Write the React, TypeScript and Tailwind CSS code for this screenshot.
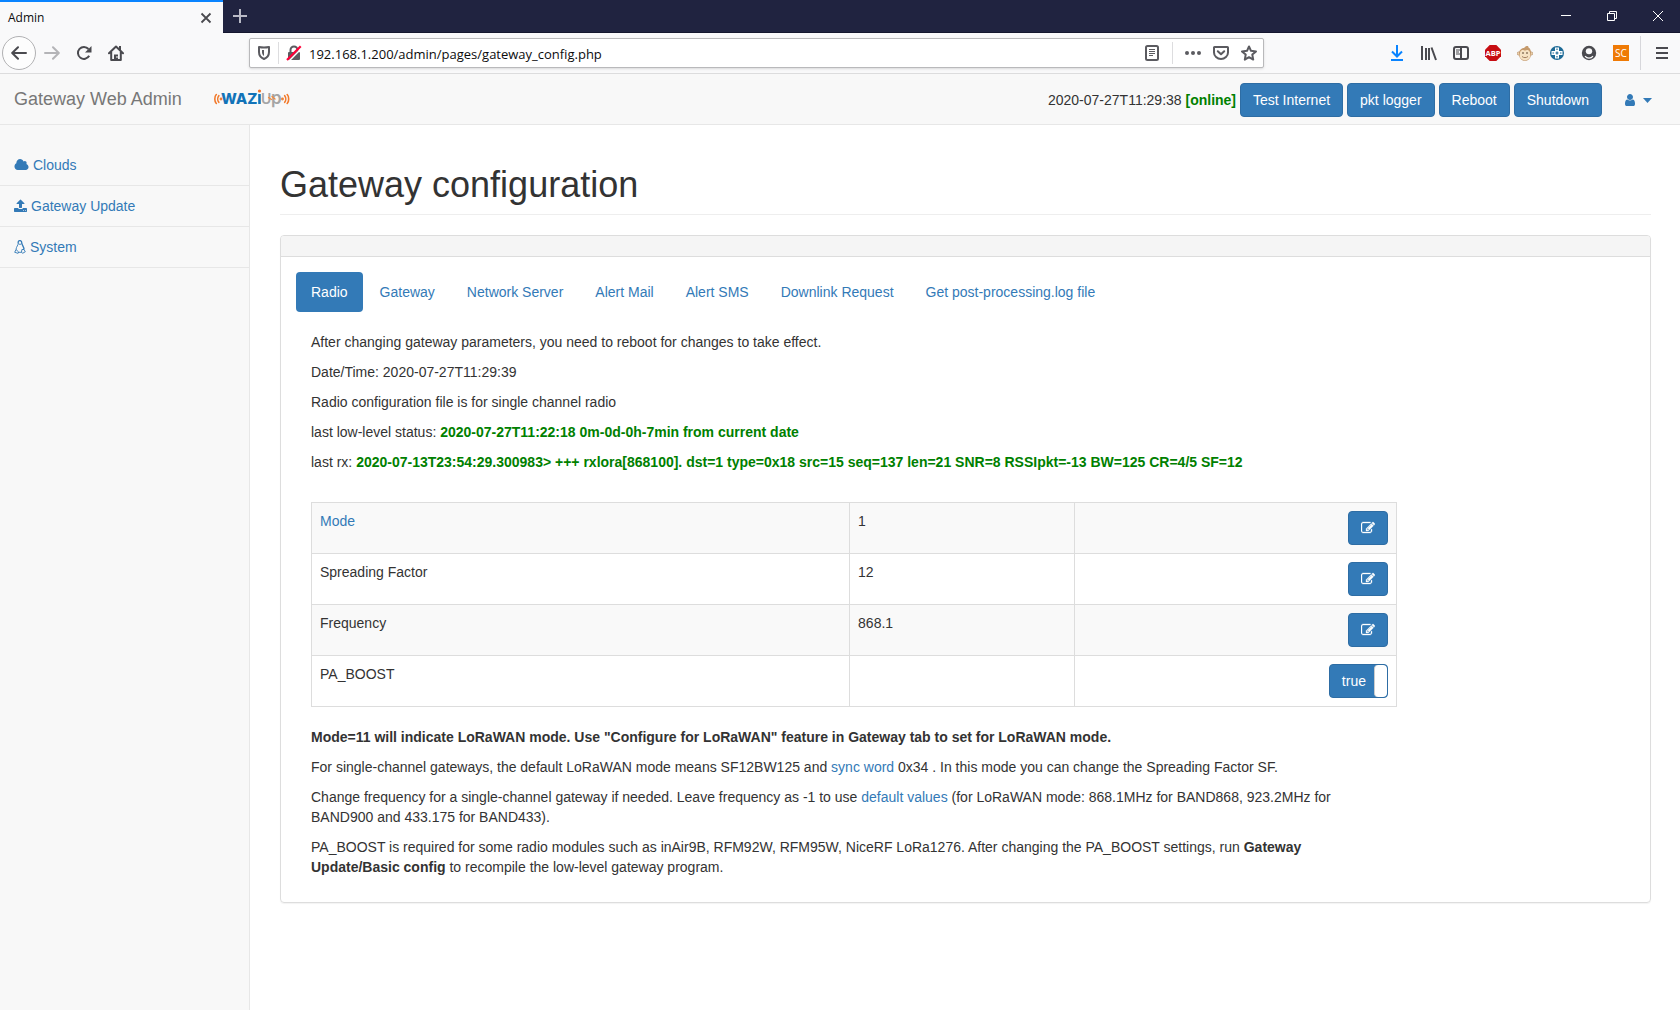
import type { ReactNode } from "react";

const edit =
  "M888 1184l116-116-152-152-116 116v56h96v96h56zm440-720q-16-16-33 1l-350 350q-17 17-1 33t33-1l350-350q17-17 1-33zm80 594v190q0 119-84.5 203.5t-203.5 84.5h-832q-119 0-203.5-84.5t-84.5-203.5v-832q0-119 84.5-203.5t203.5-84.5h832q63 0 117 25 15 7 18 23 3 17-9 29l-49 49q-14 14-32 8-23-6-45-6h-832q-66 0-113 47t-47 113v832q0 66 47 113t113 47h832q66 0 113-47t47-113v-126q0-13 9-22l64-64q15-15 35-7t20 29zm-96-738l288 288-672 672h-288v-288zm444 132l-92 92-288-288 92-92q28-28 68-28t68 28l152 152q28 28 28 68t-28 68z";
const cloud =
  "M1984 1152q0 159-112.5 271.5t-271.5 112.5h-1088q-185 0-316.5-131.5t-131.5-316.5q0-132 71-241.5t187-163.5q-2-28-2-43 0-212 150-362t362-150q158 0 286.5 88t187.5 230q70-62 166-62 106 0 181 75t75 181q0 75-41 138 129 30 213 134.5t84 239.5z";
const user =
  "M1536 1399q0 109-62.5 187t-150.5 78h-854q-88 0-150.5-78t-62.5-187q0-85 8.5-160.5t31.5-152 58.5-131 94-89 134.5-34.5q131 128 313 128t313-128q76 0 134.5 34.5t94 89 58.5 131 31.5 152 8.5 160.5zm-256-887q0 159-112.5 271.5t-271.5 112.5-271.5-112.5-112.5-271.5 112.5-271.5 271.5-112.5 271.5 112.5 112.5 271.5z";
const upload =
  "M1344 1472q0-26-19-45t-45-19-45 19-19 45 19 45 45 19 45-19 19-45zm256 0q0-26-19-45t-45-19-45 19-19 45 19 45 45 19 45-19 19-45zm128-224v320q0 40-28 68t-68 28h-1472q-40 0-68-28t-28-68v-320q0-40 28-68t68-28h427q21 56 70.5 92t110.5 36h256q61 0 110.5-36t70.5-92h427q40 0 68 28t28 68zm-325-648q-17 40-59 40h-256v448q0 26-19 45t-45 19h-256q-26 0-45-19t-19-45v-448h-256q-42 0-59-40-17-39 14-69l448-448q18-19 45-19t45 19l448 448q31 30 14 69z";

function Glyph({ children, label }: { children: ReactNode; label: string }) {
  return (
    <button type="button" aria-label={label} className="flex h-8 w-8 shrink-0 items-center justify-center">
      <svg width="16" height="16" viewBox="0 0 16 16" fill="none" stroke="#4a4a4f" strokeWidth="2">
        {children}
      </svg>
    </button>
  );
}

function TitleBar() {
  return (
    <div className="flex h-[33px] border-b border-[#14162e] bg-[#202340]">
      <div className="-mb-px flex w-[223px] items-center justify-between border-t-2 border-[#0a84ff] bg-[#f9f9fa] pr-[11px] pl-2">
        <span className="font-['Open_Sans',sans-serif] text-[12px] leading-4 text-[#0c0c0d]">Admin</span>
        <button type="button" aria-label="Close tab">
          <svg width="12" height="12" viewBox="0 0 12 12" stroke="#4a4a4f" strokeWidth="1.8">
            <path d="M1.5 1.5l9 9M10.5 1.5l-9 9" />
          </svg>
        </button>
      </div>
      <button type="button" aria-label="New tab" className="flex w-[34px] items-center justify-center">
        <svg width="14" height="14" viewBox="0 0 14 14" stroke="#b9bac6" strokeWidth="2">
          <path d="M7 0v14M0 7h14" />
        </svg>
      </button>
      <div className="flex-1" />
      <button type="button" aria-label="Minimize" className="flex w-[46px] items-center justify-center">
        <svg width="10" height="10" viewBox="0 0 10 10" stroke="#fff">
          <path d="M0 4.5h10" />
        </svg>
      </button>
      <button type="button" aria-label="Restore" className="flex w-[46px] items-center justify-center">
        <svg width="10" height="10" viewBox="0 0 10 10" fill="none" stroke="#fff">
          <path d="M.5 2.500h7v7h-7zM2.500 2.500v-2h7v7h-2" />
        </svg>
      </button>
      <button type="button" aria-label="Close window" className="flex w-[45px] items-center justify-center">
        <svg width="10" height="10" viewBox="0 0 10 10" stroke="#fff">
          <path d="M0 0l10 10M10 0L0 10" />
        </svg>
      </button>
    </div>
  );
}

function AddressBar() {
  return (
    <div className="flex h-[30px] w-[1015px] shrink items-center rounded-[2px] border border-[#b9b9bb] bg-white shadow-sm">
      <div className="flex w-7 justify-center">
        <svg width="12" height="14" viewBox="0 0 12 14" fill="none" stroke="#5b5b60" strokeWidth="2">
          <path d="M6 1.500c1.800 0 3.200-.1 5-.5v5c0 3.500-1.800 5.700-5 7-3.200-1.300-5-3.500-5-7V1c1.800.4 3.200.5 5 .5z" strokeLinejoin="round" />
          <path d="M6 4v6C4.600 9 4 7.800 4 6V4z" fill="#5b5b60" stroke="none" />
        </svg>
      </div>
      <div className="h-[22px] w-px bg-[#dddddf]" />
      <div className="flex w-[30px] justify-center">
        <svg width="16" height="16" viewBox="0 0 16 16" fill="none">
          <path d="M4.500 8V5a3.500 3.500 0 017 0v3" stroke="#5b5b60" strokeWidth="2" />
          <rect x="2" y="7" width="12" height="8" rx="1" fill="#5b5b60" />
          <path d="M2 17L16 3" stroke="#fff" strokeWidth="1.500" />
          <path d="M1 15L14.700 1.300" stroke="#ff0039" strokeWidth="2.200" />
        </svg>
      </div>
      <input
        aria-label="Address"
        defaultValue="192.168.1.200/admin/pages/gateway_config.php"
        className="min-w-0 flex-1 bg-transparent pt-px font-['Open_Sans',sans-serif] text-[13px] leading-5 text-[#0c0c0d] outline-none"
      />
      <div className="flex w-10 justify-center">
        <svg width="14" height="16" viewBox="0 0 14 16" fill="none" stroke="#5b5b60">
          <rect x="1" y="1" width="12" height="14" rx="1.500" strokeWidth="2" />
          <path d="M4 4.500h6M4 6.500h6M4 8.500h6M4 10.500h4" />
        </svg>
      </div>
      <div className="h-[22px] w-px bg-[#dddddf]" />
      <div className="flex items-center gap-3 pr-[6px] pl-3">
        <svg width="16" height="16" viewBox="0 0 16 16" fill="#5b5b60">
          <circle cx="2" cy="8" r="2" />
          <circle cx="8" cy="8" r="2" />
          <circle cx="14" cy="8" r="2" />
        </svg>
        <svg width="16" height="16" viewBox="0 0 16 16" fill="none" stroke="#5b5b60" strokeWidth="2">
          <path d="M1.600 2h12.800c.4 0 .6.3.6.6V7.500a7 6.500 0 01-14 0V2.600c0-.3.200-.6.600-.6z" />
          <path d="M4.800 6.200L8 9.300l3.200-3.100" strokeLinecap="round" strokeLinejoin="round" />
        </svg>
        <svg width="16" height="16" viewBox="0 0 16 16" fill="none" stroke="#5b5b60" strokeWidth="2">
          <path d="M8 1.500l2 4.300 5 .6-3.700 3.200.9 5L8 12.200l-4.200 2.400.9-5L1 6.400l5-.6z" strokeLinejoin="round" />
        </svg>
      </div>
    </div>
  );
}

function BrowserToolbar() {
  return (
    <div className="flex h-[41px] items-center border-b border-[#dcdcdd] bg-[#f9f9fa]">
      <button
        type="button"
        aria-label="Back"
        className="ml-[2px] flex h-[34px] w-[34px] shrink-0 items-center justify-center rounded-full border border-[#b1b1b3] bg-white/60"
      >
        <svg width="16" height="16" viewBox="0 0 16 16" fill="none" stroke="#4a4a4f" strokeWidth="2" strokeLinecap="round" strokeLinejoin="round">
          <path d="M15 8H1.500M7 2.200L1.200 8 7 13.800" />
        </svg>
      </button>
      <Glyph label="Forward">
        <path d="M1 8h13.500M9 2.200L14.800 8 9 13.800" stroke="#b4b4b7" strokeLinecap="round" strokeLinejoin="round" />
      </Glyph>
      <Glyph label="Reload">
        <path d="M13.200 10.800A6 6 0 1112.500 4" />
        <path d="M15.500 1v6.500H9z" fill="#4a4a4f" stroke="none" />
      </Glyph>
      <Glyph label="Home">
        <path d="M1 8.200L8 1.500l7 6.700M3.200 7v8h9.600V7" strokeLinecap="round" strokeLinejoin="round" />
        <path d="M6 15V9.500h4V15z" fill="#4a4a4f" stroke="none" />
        <path d="M12 1v4" />
        <path d="M8.500 12h1" stroke="#f9f9fa" />
      </Glyph>
      <div className="flex-1" />
      <AddressBar />
      <div className="flex-1" />
      <Glyph label="Downloads">
        <path d="M8 0v11M3 6.500l5 5 5-5M2 15h12" stroke="#0a84ff" />
      </Glyph>
      <Glyph label="Library">
        <path d="M1 1v14M5 3v12M8 3v12M10.500 2.500L15 15" />
      </Glyph>
      <Glyph label="Sidebars">
        <rect x="1" y="2" width="14" height="12" rx="2" />
        <path d="M8 2v12" />
        <path d="M3 5h4M3 7h3M3 9h4" strokeWidth="1" />
      </Glyph>
      <Glyph label="Adblock Plus">
        <path d="M4.700 0h6.600L16 4.700v6.600L11.300 16H4.700L0 11.300V4.700z" fill="#c70d12" stroke="none" />
        <text x="8" y="10.800" textAnchor="middle" fill="#fff" stroke="none" fontSize="7.500" fontWeight="700" fontFamily="Open Sans, sans-serif">
          ABP
        </text>
      </Glyph>
      <Glyph label="Monkey extension">
        <circle cx="1.800" cy="8.500" r="1.600" fill="#f0d6b0" stroke="#a67c52" strokeWidth=".6" />
        <circle cx="14.200" cy="8.500" r="1.600" fill="#f0d6b0" stroke="#a67c52" strokeWidth=".6" />
        <path d="M7 3C9 .5 11.500.5 11.500 2.500c2 1 3 4 2.500 7.500-.5 3.500-3 5.800-6 5.800S2.500 13.500 2 10C1.500 6 4 3 7 3z" fill="#c59a6c" stroke="none" />
        <path d="M3.200 7c1-2.800 3.800-2.300 4.800-1.300 1-1 3.800-1.500 4.800 1.300 1.500 5-.5 8.200-4.800 8.200S1.700 12 3.200 7z" fill="#f6e3c4" stroke="none" />
        <path d="M6 7v2M10 7v2" stroke="#5d4631" strokeWidth="1" />
        <path d="M5 11.500c2 1.500 4 1.500 6 0" stroke="#8d6748" strokeWidth=".8" />
      </Glyph>
      <Glyph label="Container extension">
        <circle cx="8" cy="8" r="7" fill="#1d6a96" stroke="none" />
        <path d="M6 2.500h4V6h3.500v4H10v3.500H6V10H2.500V6H6z" fill="#fff" stroke="none" />
        <path d="M8 3.500v1.500M8 11v1.500M3.500 8H5M11 8h1.500M6.500 8h3M8 6.500v3" stroke="#1d6a96" strokeWidth="1.200" />
      </Glyph>
      <Glyph label="Account">
        <circle cx="8" cy="8" r="7.200" fill="#4a4a4f" stroke="none" />
        <ellipse cx="8" cy="6.200" rx="3.200" ry="3" fill="#f9f9fa" stroke="none" />
        <path d="M4 11.200c2 2.600 6 2.600 8 0" stroke="#f9f9fa" strokeWidth="1.200" />
      </Glyph>
      <Glyph label="SC extension">
        <rect width="16" height="16" fill="#ef7a05" stroke="none" />
        <text x="8" y="11.500" textAnchor="middle" fill="#fff" stroke="none" fontSize="10" fontFamily="Open Sans, sans-serif">
          SC
        </text>
      </Glyph>
      <div className="ml-[3px] h-[34px] w-px shrink-0 bg-[#d7d7db]" />
      <div className="mr-[2px] ml-[5px] shrink-0">
        <Glyph label="Open menu">
          <path d="M3 3h10M3 8h10M3 13h10" strokeLinecap="square" />
        </Glyph>
      </div>
    </div>
  );
}

function WaziupLogo() {
  return (
    <svg role="img" aria-label="Waziup" width="76" height="20" viewBox="0 0 76 20" fill="none" strokeLinecap="round">
      <g stroke="#f27a2c" strokeWidth="1.600">
        <path d="M2.300 5.500C.3 7.500.3 12.500 2.300 14.500M4.800 6.700C3.400 8.500 3.400 11.500 4.800 13.300M73.200 5.500c2 2 2 7 0 9M70.700 6.700c1.400 1.800 1.400 4.800 0 6.600" />
        <circle cx="7" cy="10" r=".6" />
        <circle cx="68.500" cy="10" r=".6" />
      </g>
      <text x="7" y="15" fill="#1273b8" fontSize="15" fontWeight="800" fontFamily="Inter, sans-serif">
        WAZ
      </text>
      <path d="M45.500 5v10" stroke="#1273b8" strokeWidth="2.600" strokeLinecap="butt" />
      <circle cx="45.500" cy="2" r="1.600" fill="#f2742c" />
      <text x="47" y="15" fill="#a5a5a5" fontSize="14" fontWeight="600" fontFamily="Inter, sans-serif">
        U
      </text>
      <text x="57" y="14.500" fill="#a5a5a5" fontSize="17" fontWeight="600" fontFamily="Inter, sans-serif">
        p
      </text>
      <path d="M54.500 8.500l3 2M58 7.500l3 2.500" stroke="#f28a3c" strokeWidth="1.300" />
    </svg>
  );
}

const primary = "h-[34px] rounded-[4px] border border-[#2e6da4] bg-[#337ab7] px-3 text-[14px] leading-5 text-white";

function Navbar() {
  return (
    <header className="flex h-[51px] items-center border-b border-[#e7e7e7] bg-[#f8f8f8] pr-[13px] pl-[14px]">
      <a href="#home" className="text-[18px] leading-5 text-[#777]">
        Gateway Web Admin
      </a>
      <a href="#waziup" className="ml-8">
        <WaziupLogo />
      </a>
      <div className="ml-auto flex items-center gap-1 pt-[2px]">
        <span>
          2020-07-27T11:29:38 <b className="text-[#008000]">[online]</b>
        </span>
        <button type="button" className={primary}>Test Internet</button>
        <button type="button" className={primary}>pkt logger</button>
        <button type="button" className={primary}>Reboot</button>
        <button type="button" className={primary}>Shutdown</button>
        <button type="button" aria-label="User menu" className="ml-[2px] flex items-center gap-[6px] px-[15px] text-[#337ab7]">
          <svg width="14" height="14" viewBox="0 0 1792 1792" fill="currentColor">
            <path d={user} />
          </svg>
          <svg width="9" height="5" viewBox="0 0 9 5" fill="currentColor">
            <path d="M0 0h9L4.500 5z" />
          </svg>
        </button>
      </div>
    </header>
  );
}

function Sidebar() {
  const item = "flex h-[41px] items-center gap-1 border-b border-[#e7e7e7] px-[14px] text-[#337ab7]";
  return (
    <nav className="w-[250px] shrink-0 border-r border-[#e7e7e7] bg-[#f8f8f8] pt-5">
      <a href="#clouds" className={item}>
        <svg width="15" height="14" viewBox="0 0 2048 1792" preserveAspectRatio="none" fill="currentColor">
          <path d={cloud} />
        </svg>
        Clouds
      </a>
      <a href="#update" className={item}>
        <svg width="13" height="14" viewBox="64 0 1664 1792" fill="currentColor">
          <path d={upload} />
        </svg>
        Gateway Update
      </a>
      <a href="#system" className={item}>
        <svg width="12" height="14" viewBox="0 0 12 14" fill="none" stroke="currentColor" strokeWidth=".9">
          <path d="M4.200 3C4 1.300 4.800.6 6 .6s1.800.9 1.800 2.400c0 2 2.200 3.600 2.200 6.500" strokeWidth="1.300" />
          <path d="M4.200 3c.2 2-2 3.800-2.200 6.500M4.300 3.600L6 4.500l1.600-.9" />
          <path d="M2 9.500L.7 12.300l3.400 1 .6-1.300zM10 9.500l1.300 2.300-2.800 1.500-1-1.200.4-2.600zM4.600 12.300h3" />
        </svg>
        System
      </a>
    </nav>
  );
}

const tabs = ["Gateway", "Network Server", "Alert Mail", "Alert SMS", "Downlink Request", "Get post-processing.log file"];

const rows = [
  { name: "Mode", value: "1", link: true },
  { name: "Spreading Factor", value: "12" },
  { name: "Frequency", value: "868.1" },
  { name: "PA_BOOST", value: "", toggle: true },
];

function ConfigTable() {
  const cell = "border border-[#ddd] p-2 align-top";
  return (
    <table className="mb-5 w-full table-fixed border-collapse">
      <colgroup>
        <col className="w-[49.600%]" />
        <col className="w-[20.700%]" />
        <col />
      </colgroup>
      <tbody>
        {rows.map((row) => (
          <tr key={row.name} className="odd:bg-[#f9f9f9]">
            <td className={cell}>
              {row.link ? <a href="#mode" className="text-[#337ab7]">{row.name}</a> : row.name}
            </td>
            <td className={cell}>{row.value}</td>
            <td className={cell}>
              <div className="flex justify-end">
                {row.toggle ? (
                  <label className="flex h-[34px] w-[59px] cursor-pointer items-stretch overflow-hidden rounded-[4px] border border-[#2e6da4] bg-[#337ab7] text-white">
                    <input type="checkbox" defaultChecked className="sr-only" />
                    <span className="flex flex-1 items-center pl-3">true</span>
                    <span className="w-[13px] rounded-[4px] border-l border-[#ccc] bg-white" />
                  </label>
                ) : (
                  <button
                    type="button"
                    aria-label={"Edit " + row.name}
                    className="flex h-[34px] w-10 items-center justify-center rounded-[4px] border border-[#2e6da4] bg-[#337ab7] text-white"
                  >
                    <svg width="14" height="14" viewBox="0 0 1792 1792" fill="currentColor" stroke="currentColor" strokeWidth="40">
                      <path d={edit} />
                    </svg>
                  </button>
                )}
              </div>
            </td>
          </tr>
        ))}
      </tbody>
    </table>
  );
}

export default function App() {
  return (
    <div className="flex min-h-screen flex-col bg-white font-['Liberation_Sans',Arial,sans-serif] text-[14px] leading-5 text-[#333]">
      <TitleBar />
      <BrowserToolbar />
      <Navbar />
      <div className="flex flex-1">
        <Sidebar />
        <main className="min-w-0 flex-1 pt-10 pr-[29px] pl-[30px]">
          <h1 className="mb-5 border-b border-[#eee] pb-[9px] text-[36px] leading-10">Gateway configuration</h1>
          <section className="rounded-[4px] border border-[#ddd] shadow-[0_1px_1px_rgba(0,0,0,0.05)]">
            <div className="h-[21px] rounded-t-[3px] border-b border-[#ddd] bg-[#f5f5f5]" />
            <div className="p-[15px]">
              <nav className="flex gap-[2px]">
                <a href="#radio" className="rounded-[4px] bg-[#337ab7] px-[15px] py-[10px] text-white">Radio</a>
                {tabs.map((tab) => (
                  <a key={tab} href="#tab" className="px-[15px] py-[10px] text-[#337ab7]">{tab}</a>
                ))}
              </nav>
              <div className="w-10/12 px-[15px] pt-5">
                <div className="mb-[30px] flex flex-col gap-[10px]">
                  <p>After changing gateway parameters, you need to reboot for changes to take effect.</p>
                  <p>Date/Time: 2020-07-27T11:29:39</p>
                  <p>Radio configuration file is for single channel radio</p>
                  <p>
                    last low-level status: <b className="text-[#008000]">2020-07-27T11:22:18 0m-0d-0h-7min from current date</b>
                  </p>
                  <p>
                    last rx:{" "}
                    <b className="text-[#008000]">
                      2020-07-13T23:54:29.300983&gt; +++ rxlora[868100]. dst=1 type=0x18 src=15 seq=137 len=21 SNR=8 RSSIpkt=-13 BW=125 CR=4/5 SF=12
                    </b>
                  </p>
                </div>
                <ConfigTable />
                <div className="mb-[10px] flex flex-col gap-[10px] pr-5">
                  <p className="font-bold">
                    Mode=11 will indicate LoRaWAN mode. Use "Configure for LoRaWAN" feature in Gateway tab to set for LoRaWAN mode.
                  </p>
                  <p>
                    For single-channel gateways, the default LoRaWAN mode means SF12BW125 and{" "}
                    <a href="#sync" className="text-[#337ab7]">sync word</a> 0x34 . In this mode you can change the Spreading Factor SF.
                  </p>
                  <p>
                    Change frequency for a single-channel gateway if needed. Leave frequency as -1 to use{" "}
                    <a href="#defaults" className="text-[#337ab7]">default values</a> (for LoRaWAN mode: 868.1MHz for BAND868, 923.2MHz for
                    BAND900 and 433.175 for BAND433).
                  </p>
                  <p>
                    PA_BOOST is required for some radio modules such as inAir9B, RFM92W, RFM95W, NiceRF LoRa1276. After changing the PA_BOOST
                    settings, run{" "}
                    <b>
                      Gateway <span className="whitespace-nowrap">Update/Basic config</span>
                    </b>{" "}
                    to recompile the low-level gateway program.
                  </p>
                </div>
              </div>
            </div>
          </section>
        </main>
      </div>
    </div>
  );
}
